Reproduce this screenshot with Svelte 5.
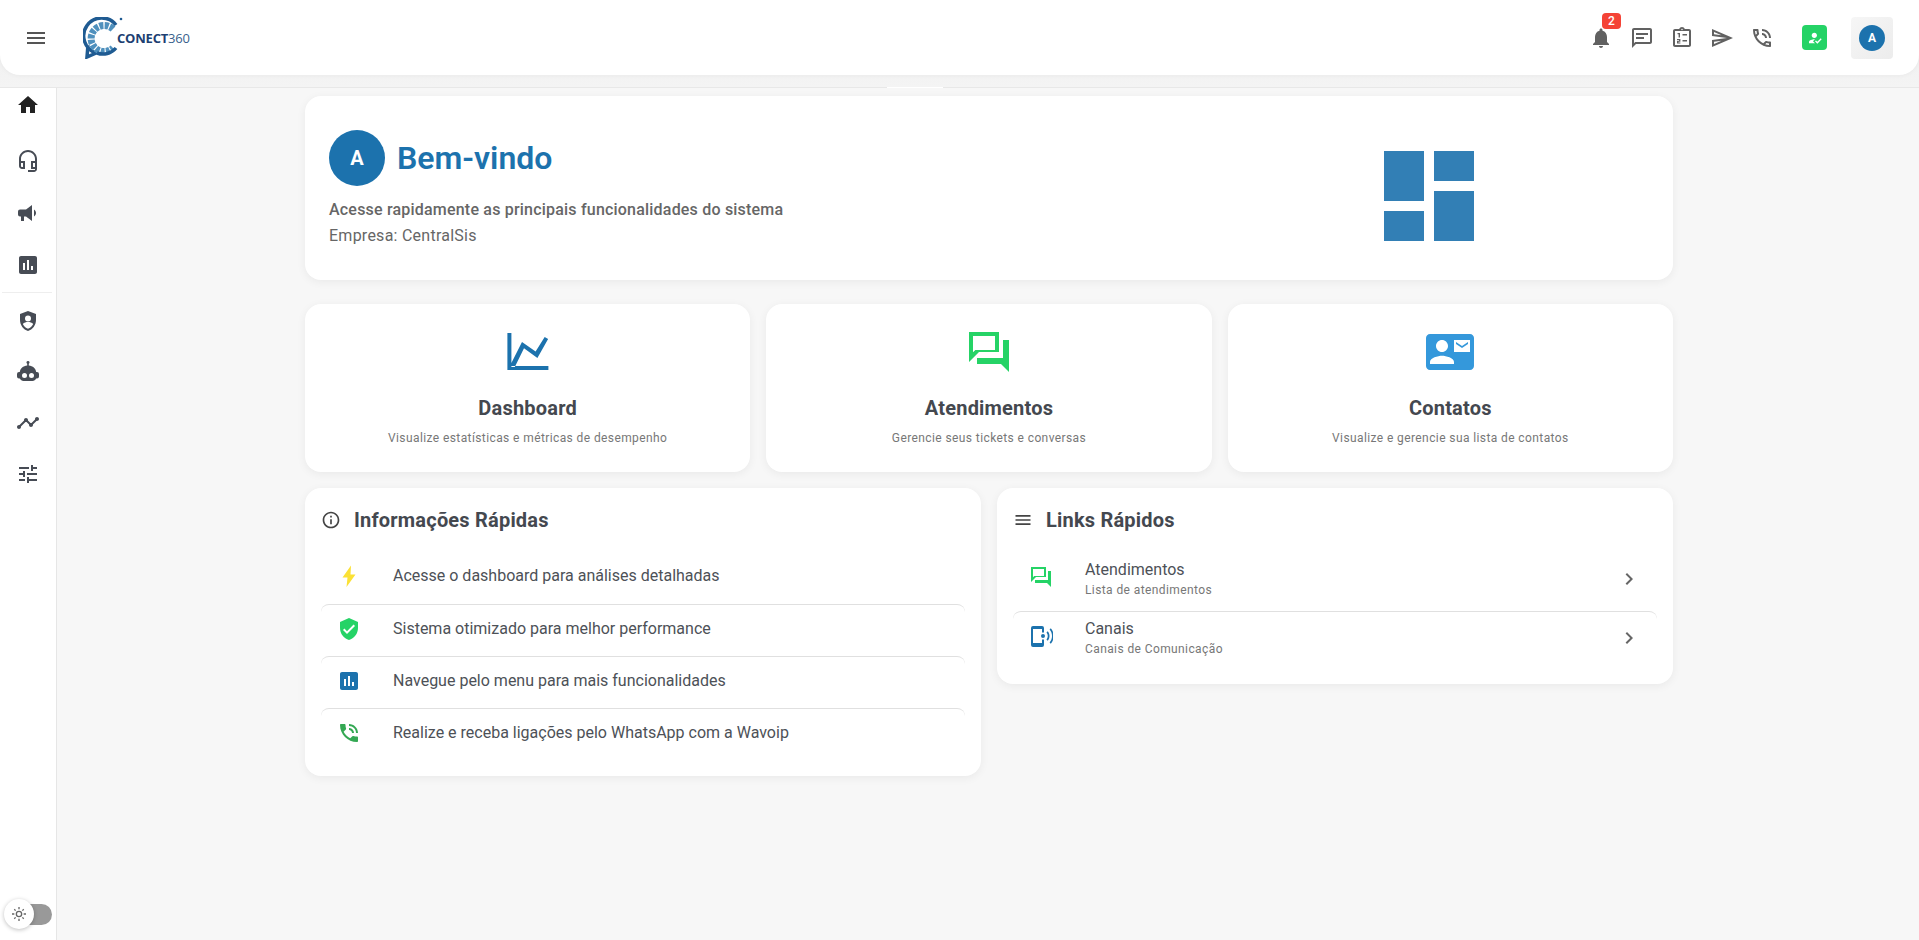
<script>
    // material icon paths
    const icons = {
        menu: 'M3 18h18v-2H3v2zm0-5h18v-2H3v2zm0-7v2h18V6H3z',
        bell: 'M12 22c1.1 0 2-.9 2-2h-4c0 1.1.89 2 2 2zm6-6v-5c0-3.07-1.64-5.64-4.5-6.32V4c0-.83-.67-1.5-1.5-1.5s-1.5.67-1.5 1.5v.68C7.63 5.36 6 7.92 6 11v5l-2 2v1h16v-1l-2-2z',
        chat: 'M4 4h16v12H5.17L4 17.17V4m0-2c-1.1 0-1.99.9-1.99 2L2 22l4-4h14c1.1 0 2-.9 2-2V4c0-1.1-.9-2-2-2H4zm2 9h8v2H6v-2zm0-4h12v2H6V7z',
        tasks: 'M19 3h-4.18C14.4 1.84 13.3 1 12 1s-2.4.84-2.82 2H5c-1.1 0-2 .9-2 2v14c0 1.1.9 2 2 2h14c1.1 0 2-.9 2-2V5c0-1.1-.9-2-2-2zm-7-.25c.41 0 .75.34.75.75s-.34.75-.75.75-.75-.34-.75-.75.34-.75.75-.75zM19 19H5V5h14v14zM12.5 8H17v1.6h-4.5zM12.5 14H17v1.6h-4.5zM7.5 7H10v4.5H8.6V8.2H7.5zM7 13h3.4v2.7H8.4v.7h2V17.500H7v-2.700h2V14H7z',
        send: 'M4.01 6.03l7.51 3.22-7.52-1 .01-2.22m7.5 8.72L4 17.97v-2.22l7.51-1M2.01 3L2 10l15 2-15 2 .01 7L23 12 2.01 3z',
        call: 'M15 12h2c0-2.76-2.24-5-5-5v2c1.66 0 3 1.34 3 3zm4 0h2c0-4.97-4.03-9-9-9v2c3.87 0 7 3.13 7 7zm1 3.5c-1.25 0-2.45-.2-3.57-.57-.1-.03-.21-.05-.31-.05-.26 0-.51.1-.71.29l-2.2 2.2c-2.83-1.44-5.15-3.75-6.59-6.59l2.2-2.21c.28-.26.36-.65.25-1C8.7 6.45 8.5 5.25 8.5 4c0-.55-.45-1-1-1H4c-.55 0-1 .45-1 1 0 9.39 7.61 17 17 17 .55 0 1-.45 1-1v-3.5c0-.55-.45-1-1-1zM5.030 5h1.5c.07.88.22 1.75.45 2.58l-1.2 1.21c-.4-1.21-.66-2.47-.75-3.79zM19 18.97c-1.32-.09-2.6-.35-3.8-.76l1.2-1.2c.85.24 1.72.39 2.6.45v1.51z',
        callFill: 'M20 15.5c-1.25 0-2.45-.2-3.57-.57-.35-.11-.74-.03-1.02.24l-2.2 2.2c-2.83-1.44-5.15-3.75-6.59-6.59l2.2-2.21c.28-.27.36-.66.25-1.01C8.7 6.45 8.5 5.25 8.5 4c0-.55-.45-1-1-1H4c-.55 0-1 .45-1 1 0 9.39 7.61 17 17 17 .55 0 1-.45 1-1v-3.500c0-.55-.45-1-1-1zM19 12h2c0-4.97-4.03-9-9-9v2c3.87 0 7 3.13 7 7zm-4 0h2c0-2.76-2.24-5-5-5v2c1.66 0 3 1.34 3 3z',
        userCheck: 'M9 17l3-2.94c-.39-.04-.68-.06-1-.06-2.67 0-8 1.34-8 4v2h9l-3-3zm2-5c2.21 0 4-1.79 4-4s-1.79-4-4-4-4 1.79-4 4 1.79 4 4 4m4.47 8.5L12 17l1.4-1.41 2.07 2.08 5.13-5.17 1.4 1.41z',
        home: 'M10 20v-6h4v6h5v-8h3L12 3 2 12h3v8z',
        headset: 'M12 1c-4.97 0-9 4.03-9 9v7c0 1.66 1.34 3 3 3h3v-8H5v-2c0-3.87 3.13-7 7-7s7 3.13 7 7v2h-4v8h4v1h-7v2h6c1.66 0 3-1.34 3-3V10c0-4.97-4.03-9-9-9zM7 14v4H6c-.55 0-1-.45-1-1v-3h2zm12 0v4h-2v-4h2z',
        megaphone: 'M4 8.500h6l6-4.500v16l-6-4.500H8V20H5v-4.500H4a2 2 0 0 1-2-2v-3a2 2 0 0 1 2-2zM18 8.500c1.200.9 2 2.200 2 3.500s-.8 2.600-2 3.500z',
        bars: 'M19 3H5c-1.100 0-2 .9-2 2v14c0 1.100.9 2 2 2h14c1.100 0 2-.9 2-2V5c0-1.100-.9-2-2-2zM9 17H7v-7h2v7zm4 0h-2V7h2v10zm4 0h-2v-4h2v4z',
        shield: 'M12 2 4 5v6c0 5 3.400 9.700 8 11 4.600-1.300 8-6 8-11V5zm0 4.500a3 3 0 1 1 0 6 3 3 0 0 1 0-6zM6.800 15c1.300-1.400 3.200-2 5.200-2s3.900.6 5.200 2c-1 2.300-3 4-5.200 4.800-2.200-.8-4.200-2.500-5.200-4.800z',
        robot: 'M12 1a1.500 1.500 0 0 1 .8 2.800V5.500c4 .3 7 3 7.400 6.500h.8a2 2 0 0 1 2 2v2.500a2 2 0 0 1-2 2h-.9c-.6 1.500-2 2.500-3.600 2.500H7.500c-1.600 0-3-1-3.600-2.500H3a2 2 0 0 1-2-2V14a2 2 0 0 1 2-2h.8c.4-3.500 3.400-6.200 7.400-6.500V3.800A1.500 1.500 0 0 1 12 1zM8.500 13a2.500 2.500 0 1 0 0 5 2.500 2.500 0 0 0 0-5zm7 0a2.500 2.500 0 1 0 0 5 2.500 2.500 0 0 0 0-5z',
        timeline: 'M23 8c0 1.100-.9 2-2 2-.18 0-.35-.02-.51-.07l-3.560 3.550c.05.16.07.34.07.52 0 1.100-.9 2-2 2s-2-.9-2-2c0-.18.02-.36.07-.52l-2.550-2.550c-.16.05-.34.07-.52.07s-.36-.02-.52-.07l-4.550 4.560c.05.16.07.33.07.51 0 1.100-.9 2-2 2s-2-.9-2-2 .9-2 2-2c.18 0 .35.02.51.07l4.560-4.550C8.020 9.360 8 9.180 8 9c0-1.100.9-2 2-2s2 .9 2 2c0 .18-.02.36-.07.52l2.550 2.550c.16-.05.34-.07.52-.07s.36.02.52.07l3.550-3.560C19.020 8.350 19 8.180 19 8c0-1.100.9-2 2-2s2 .9 2 2z',
        tune: 'M3 17v2h6v-2H3zM3 5v2h10V5H3zm10 16v-2h8v-2h-8v-2h-2v6h2zM7 9v2H3v2h4v2h2V9H7zm14 4v-2H11v2h10zm-6-4h2V7h4V5h-4V3h-2v6z',
        dashboard: 'M3 13h8V3H3v10zm0 8h8v-6H3v6zm10 0h8V11h-8v10zm0-18v6h8V3h-8z',
        question: 'M15 4v7H5.170L4 12.170V4h11m2-2H2v15l5-5h10V2zm5 4h-3v9H6v3h12l4 4V6z',
        contact: 'M21 8V7l-3 2-3-2v1l3 2 3-2zm1-5H2C.9 3 0 3.900 0 5v14c0 1.100.9 2 2 2h20c1.100 0 1.990-.9 1.990-2L24 5c0-1.100-.9-2-2-2zM8 6c1.660 0 3 1.340 3 3s-1.340 3-3 3-3-1.340-3-3 1.340-3 3-3zm6 12H2v-1c0-2 4-3.100 6-3.100s6 1.100 6 3.100v1zm8-6h-8V6h8v6z',
        chart: 'M1.700 2.500h2v16.500h18.500v2H1.700zM3.700 17.500L9 7l6.800 4.700 4.540-7.200 1.720 1L16.700 15l-6.700-4.900-4.600 9.400h-1.700z',
        info: 'M11 7h2v2h-2zm0 4h2v6h-2zm1-9C6.480 2 2 6.480 2 12s4.480 10 10 10 10-4.480 10-10S17.520 2 12 2zm0 18c-4.410 0-8-3.590-8-8s3.590-8 8-8 8 3.590 8 8-3.590 8-8 8z',
        bolt: 'M14 1.500 5.500 13.500h5L9.500 23 18.500 10.500h-5z',
        verified: 'M12 1L3 5v6c0 5.550 3.840 10.740 9 12 5.160-1.260 9-6.450 9-12V5l-9-4zm-2 16l-4-4 1.410-1.410L10 14.170l6.590-6.590L18 9l-8 8z',
        chevron: 'M10 6L8.590 7.410 13.170 12l-4.580 4.590L10 18l6-6z',
        channel: 'M4 2h9a2 2 0 0 1 2 2v4.500h-2V5H4v14h9v-3.500h2V21a2 2 0 0 1-2 2H4a2 2 0 0 1-2-2V4a2 2 0 0 1 2-2zM14 10a2 2 0 1 1 0 4 2 2 0 0 1 0-4zM17.500 8.500l1.200-1.200c2.400 2.700 2.400 6.700 0 9.400l-1.200-1.200c1.700-2 1.700-5 0-7zM20.600 5.500l1.200-1.200c3.900 4.400 3.900 11 0 15.400l-1.200-1.200c3.200-3.700 3.200-9.300 0-13z',
        sun: 'M12 9a3 3 0 1 1 0 6 3 3 0 0 1 0-6m0-2a5 5 0 1 0 0 10 5 5 0 0 0 0-10zM11 1.500h2V5h-2zM11 19h2v3.500h-2zM1.500 11H5v2H1.500zM19 11h3.500v2H19zM4.200 5.600l1.400-1.400 2 2-1.400 1.400zM16.400 17.800l1.400-1.400 2 2-1.400 1.400zM4.200 18.400l2-2 1.400 1.400-2 2zM16.400 6.200l2-2 1.400 1.400-2 2z'
    };

    const topIcons = ['chat', 'tasks', 'send', 'call'];

    const menuTop = ['home', 'headset', 'megaphone', 'bars'];
    const menuBottom = ['shield', 'robot', 'timeline', 'tune'];

    const shortcuts = [
        { icon: 'chart', color: '#1c72ad', title: 'Dashboard', text: 'Visualize estatísticas e métricas de desempenho' },
        { icon: 'question', color: '#25d366', title: 'Atendimentos', text: 'Gerencie seus tickets e conversas' },
        { icon: 'contact', color: '#3498db', title: 'Contatos', text: 'Visualize e gerencie sua lista de contatos' }
    ];

    const infos = [
        { icon: 'bolt', color: '#fbe135', text: 'Acesse o dashboard para análises detalhadas' },
        { icon: 'verified', color: '#25d366', text: 'Sistema otimizado para melhor performance' },
        { icon: 'bars', color: '#1c72ad', text: 'Navegue pelo menu para mais funcionalidades' },
        { icon: 'callFill', color: '#34a853', text: 'Realize e receba ligações pelo WhatsApp com a Wavoip' }
    ];

    const links = [
        { icon: 'question', color: '#25d366', title: 'Atendimentos', text: 'Lista de atendimentos' },
        { icon: 'channel', color: '#1c72ad', title: 'Canais', text: 'Canais de Comunicação' }
    ];
</script>

{#snippet icon(name, size, color)}
    <svg class="icon" width={size} height={size} viewBox="0 0 24 24" fill={color} fill-rule="evenodd" aria-hidden="true">
        <path d={icons[name]} />
    </svg>
{/snippet}

<div class="page">
    <div class="top">
        <header>
            <button class="burger">{@render icon('menu', 24, '#555')}</button>
            <div class="logo">
                <svg width="40" height="42" viewBox="0 0 40 42" aria-hidden="true">
                    <path d="M33 8 A18 18 0 1 0 13 36 L4 40 L5 28" fill="none" stroke="#1f5b92" stroke-width="3.500" />
                    <path d="M30 12 A13 13 0 1 0 30 31" fill="none" stroke="#4f90bd" stroke-width="7" stroke-dasharray="4 1.200" />
                    <path d="M33 31 A17 17 0 0 1 14 36" fill="none" stroke="#1f5b92" stroke-width="3.500" />
                    <circle cx="38" cy="2" r="1.300" fill="#1f5b92" />
                </svg>
                <span class="logo-text">CONECT<em>360</em></span>
            </div>
            <div class="top-actions">
                <div class="bell">
                    {@render icon('bell', 24, '#616161')}
                    <span class="badge">2</span>
                </div>
                {#each topIcons as name}
                    <div class="top-icon">{@render icon(name, 24, '#616161')}</div>
                {/each}
                <div class="status">{@render icon('userCheck', 16, '#fff')}</div>
                <div class="user"><span class="user-avatar">A</span></div>
            </div>
        </header>
    </div>

    <div class="body">
        <nav>
            <div class="nav-group first">
                {#each menuTop as name, i}
                    {@render icon(name, 24, i == 0 ? '#222' : '#474c55')}
                {/each}
            </div>
            <hr />
            <div class="nav-group second">
                {#each menuBottom as name}
                    {@render icon(name, 24, '#474c55')}
                {/each}
            </div>
            <div class="theme-toggle">
                <span class="track"></span>
                <span class="knob">{@render icon('sun', 16, '#666')}</span>
            </div>
        </nav>

        <main>
            <section class="card hero">
                <div>
                    <div class="hero-head">
                        <span class="hero-avatar">A</span>
                        <h1>Bem-vindo</h1>
                    </div>
                    <p class="hero-sub">Acesse rapidamente as principais funcionalidades do sistema</p>
                    <p class="hero-company">Empresa: CentralSis</p>
                </div>
                <div class="hero-art">{@render icon('dashboard', 120, '#1c72ad')}</div>
            </section>

            <section class="shortcuts">
                {#each shortcuts as s}
                    <div class="card shortcut">
                        {@render icon(s.icon, 48, s.color)}
                        <h3>{s.title}</h3>
                        <p>{s.text}</p>
                    </div>
                {/each}
            </section>

            <section class="lists">
                <div class="card list-card">
                    <h2>{@render icon('info', 20, '#444')}Informações Rápidas</h2>
                    {#each infos as item}
                        <div class="info-row">
                            <span class="row-icon">{@render icon(item.icon, 24, item.color)}</span>
                            <span>{item.text}</span>
                        </div>
                    {/each}
                </div>
                <div class="card list-card">
                    <h2>{@render icon('menu', 20, '#444')}Links Rápidos</h2>
                    {#each links as link}
                        <div class="link-row">
                            <span class="row-icon">{@render icon(link.icon, 24, link.color)}</span>
                            <div class="link-text">
                                <div class="link-title">{link.title}</div>
                                <div class="link-sub">{link.text}</div>
                            </div>
                            <span class="row-arrow">{@render icon('chevron', 24, '#666')}</span>
                        </div>
                    {/each}
                </div>
            </section>
        </main>
    </div>
</div>

<style>
    :global(body) {
        margin: 0;
        font-family: Roboto, "Liberation Sans", sans-serif;
        color: #44484f;
        background: #f7f7f7;
    }
    h1, h2, h3, p {
        margin: 0;
    }
    .icon {
        display: block;
        flex-shrink: 0;
    }
    .page {
        height: 940px;
        display: flex;
        flex-direction: column;
        overflow: hidden;
    }

    /* top bar */
    .top {
        position: relative;
        padding-bottom: 12px;
        background: linear-gradient(#ebebeb, #f4f4f4);
        border-bottom: 1px solid #e8e8e8;
    }
    .top::after {
        content: "";
        position: absolute;
        left: 887px;
        bottom: -1px;
        width: 56px;
        height: 1px;
        background: #fff;
    }
    header {
        height: 75px;
        display: flex;
        align-items: center;
        background: #fff;
        border-radius: 0 0 20px 20px;
        box-shadow: 0 1px 4px rgba(0, 0, 0, .04);
    }
    .burger {
        border: 0;
        background: none;
        padding: 0;
        margin-left: 24px;
    }
    .logo {
        display: flex;
        align-items: center;
        margin-left: 35px;
    }
    .logo-text {
        margin-left: -6px;
        font-family: "Open Sans", sans-serif;
        font-size: 13px;
        font-weight: 700;
        letter-spacing: -.2px;
        color: #1d3f72;
    }
    .logo-text em {
        font-style: normal;
        font-weight: 400;
        color: #3a5f8c;
    }
    .top-actions {
        margin-left: auto;
        margin-right: 26px;
        display: flex;
        align-items: center;
    }
    .bell {
        position: relative;
        width: 24px;
        margin-right: 1px;
    }
    .badge {
        position: absolute;
        top: -13px;
        left: 13px;
        width: 19px;
        height: 16px;
        border-radius: 4px;
        background: #f44336;
        color: #fff;
        font-size: 12px;
        font-weight: 500;
        line-height: 16px;
        text-align: center;
    }
    .top-icon {
        margin-left: 16px;
    }
    .status {
        width: 25px;
        height: 25px;
        margin-left: 28px;
        border-radius: 4px;
        background: #25d366;
        display: flex;
        align-items: center;
        justify-content: center;
    }
    .user {
        width: 42px;
        height: 42px;
        margin-left: 24px;
        border-radius: 4px;
        background: linear-gradient(135deg, #f6f6f6, #ececec);
        display: flex;
        align-items: center;
        justify-content: center;
    }
    .user-avatar {
        width: 26px;
        height: 26px;
        border-radius: 50%;
        background: #1c72ad;
        color: #fff;
        font-size: 12px;
        font-weight: 700;
        line-height: 26px;
        text-align: center;
    }

    /* sidebar */
    .body {
        flex: 1;
        display: flex;
        min-height: 0;
    }
    nav {
        width: 56px;
        flex-shrink: 0;
        display: flex;
        flex-direction: column;
        background: #fff;
        border-right: 1px solid #e6e6e6;
    }
    .nav-group {
        display: flex;
        flex-direction: column;
        align-items: center;
        gap: 28px;
        padding-top: 8px;
    }
    .nav-group.first .icon:first-child {
        margin-top: -3px;
        margin-bottom: 4px;
    }
    .nav-group.second {
        gap: 27px;
        padding-top: 0;
    }
    hr {
        width: 50px;
        margin: 15px 0 16px 2px;
        border: 0;
        border-top: 1px solid #eee;
    }
    .theme-toggle {
        position: relative;
        height: 30px;
        margin-top: auto;
        margin-bottom: 11px;
    }
    .track {
        position: absolute;
        left: 24px;
        top: 5px;
        width: 28px;
        height: 21px;
        border-radius: 0 11px 11px 0;
        background: #999;
    }
    .knob {
        position: absolute;
        left: 4px;
        top: 0;
        width: 30px;
        height: 30px;
        border-radius: 50%;
        background: #fff;
        box-shadow: 0 1px 4px rgba(0, 0, 0, .25);
        display: flex;
        align-items: center;
        justify-content: center;
    }

    /* content */
    main {
        width: 1368px;
        margin: 0 auto;
        padding: 8px 0 0 2px;
        display: flex;
        flex-direction: column;
        gap: 24px;
    }
    .card {
        background: #fff;
        border-radius: 16px;
        box-shadow: 0 2px 10px rgba(0, 0, 0, .06);
    }
    .hero {
        box-sizing: border-box;
        height: 184px;
        padding: 32px 24px 24px;
        display: grid;
        grid-template-columns: 2fr 1fr;
    }
    .hero-head {
        margin-top: 2px;
        display: flex;
        align-items: center;
        gap: 12px;
    }
    .hero-avatar {
        width: 56px;
        height: 56px;
        border-radius: 50%;
        background: #1c72ad;
        color: #fff;
        font-size: 20px;
        font-weight: 700;
        line-height: 56px;
        text-align: center;
    }
    h1 {
        font-size: 32px;
        font-weight: 600;
        color: #1c72ad;
    }
    .hero-sub {
        margin-top: 12px;
        font-size: 16px;
        font-weight: 500;
        letter-spacing: .2px;
        line-height: 24px;
        color: #666;
    }
    .hero-company {
        margin-top: 2px;
        font-size: 16px;
        letter-spacing: .25px;
        line-height: 24px;
        color: #666;
    }
    .hero-art {
        display: flex;
        justify-content: center;
        padding-top: 8px;
        opacity: .9;
    }

    .shortcuts {
        display: grid;
        grid-template-columns: repeat(3, 1fr);
        gap: 16px;
    }
    .shortcut {
        padding: 24px;
        height: 168px;
        box-sizing: border-box;
        display: flex;
        flex-direction: column;
        align-items: center;
    }
    h3 {
        margin-top: 16px;
        font-size: 20px;
        font-weight: 700;
        letter-spacing: .2px;
        line-height: 32px;
        color: #44484f;
    }
    .shortcut p {
        margin-top: 4px;
        font-size: 12px;
        letter-spacing: .4px;
        line-height: 20px;
        color: #777;
    }

    .lists {
        display: grid;
        grid-template-columns: 1fr 1fr;
        gap: 16px;
        align-items: start;
        margin-top: -8px;
    }
    .list-card {
        padding: 16px;
    }
    h2 {
        display: flex;
        align-items: center;
        gap: 13px;
        margin-bottom: 16px;
        font-size: 20px;
        font-weight: 700;
        letter-spacing: .2px;
        line-height: 32px;
        color: #44484f;
    }
    .info-row {
        box-sizing: border-box;
        height: 52px;
        padding: 12px 16px 0;
        display: flex;
        font-size: 16px;
        line-height: 24px;
        color: #4d5157;
    }
    .info-row + .info-row, .link-row + .link-row {
        border-top: 1px solid #e0e0e0;
        border-radius: 8px 8px 0 0;
    }
    .row-icon {
        width: 56px;
        flex-shrink: 0;
    }
    .link-row {
        padding: 6px 16px 11px;
        display: flex;
        align-items: center;
    }
    .link-row + .link-row {
        padding: 5px 16px 9px;
    }
    .link-row .row-icon {
        margin-bottom: 4px;
    }
    .link-text {
        flex: 1;
    }
    .link-title {
        font-size: 16px;
        line-height: 24px;
        color: #4d5157;
    }
    .link-sub {
        margin-top: -2px;
        font-size: 12px;
        letter-spacing: .4px;
        line-height: 20px;
        color: #777;
    }
</style>
